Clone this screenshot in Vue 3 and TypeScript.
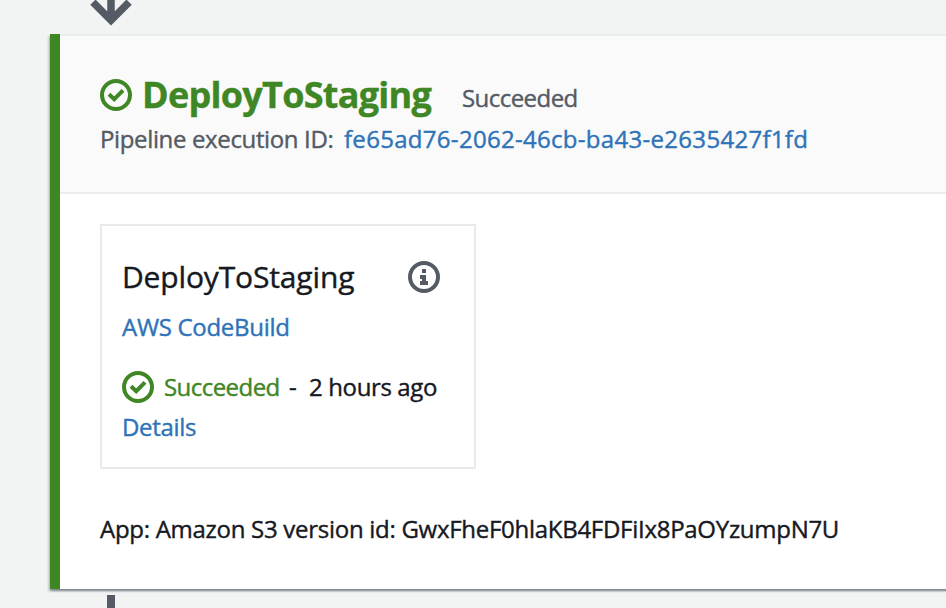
<script setup lang="ts">
interface Stage {
  name: string
  status: string
  executionId: string
  revision: string
}

interface Action {
  name: string
  provider: string
  status: string
  age: string
}

const stage: Stage = {
  name: 'DeployToStaging',
  status: 'Succeeded',
  executionId: 'fe65ad76-2062-46cb-ba43-e2635427f1fd',
  revision: 'App: Amazon S3 version id: GwxFheF0hlaKB4FDFiIx8PaOYzumpN7U',
}

const action: Action = {
  name: 'DeployToStaging',
  provider: 'AWS CodeBuild',
  status: 'Succeeded',
  age: '2 hours ago',
}
</script>

<template>
  <main class="pipeline">
    <svg class="arrow" viewBox="0 0 42 34" aria-hidden="true">
      <path d="M21 0V20M2.9 2.2L21 20.3L39.1 2.2" />
    </svg>

    <section class="stage">
      <header class="stage-header">
        <div class="title-row">
          <svg class="icon success" viewBox="0 0 32 32" aria-hidden="true">
            <circle cx="16" cy="16" r="14" />
            <path d="M9 15.2L14.2 20.2L23 11.4" />
          </svg>
          <h1 class="stage-name"><span>{{ stage.name }}</span></h1>
          <span class="stage-status">{{ stage.status }}</span>
        </div>
        <div class="execution">
          <span class="execution-label">Pipeline execution ID:</span>
          <a class="execution-id">{{ stage.executionId }}</a>
        </div>
      </header>

      <div class="stage-body">
        <article class="action">
          <div class="action-head">
            <h2 class="action-name">{{ action.name }}</h2>
            <svg class="icon info" viewBox="0 0 32 32" aria-hidden="true">
              <circle cx="16" cy="16" r="14" />
              <path d="M14 8h4v4h-4zM12 14h6v6h2v4h-8v-4h2v-2h-2z" />
            </svg>
          </div>
          <a class="provider">{{ action.provider }}</a>
          <div class="action-status">
            <svg class="icon success" viewBox="0 0 32 32" aria-hidden="true">
              <circle cx="16" cy="16" r="14" />
              <path d="M9 15.2L14.2 20.2L23 11.4" />
            </svg>
            <span class="status-text">{{ action.status }}</span>
            <span class="dash">-</span>
            <span class="age">{{ action.age }}</span>
          </div>
          <a class="details">Details</a>
        </article>
        <p class="revision"><span>{{ stage.revision }}</span></p>
      </div>
    </section>

    <div class="connector"></div>
  </main>
</template>

<style>
body {
  background: #f2f3f3;
  overflow: hidden;
}
</style>

<style scoped>
.pipeline {
  box-sizing: border-box;
  width: 946px;
  height: 608px;
  padding-left: 50px;
  overflow: hidden;
  background: #f2f3f3;
  color: #16191f;
  font-family: "Open Sans", "Noto Sans", sans-serif;
  font-size: 24px;
  font-weight: 500;
  line-height: 40px;
  letter-spacing: -0.3px;
  white-space: nowrap;
  -webkit-text-stroke: 0.4px currentColor;
}
.arrow {
  display: block;
  width: 42px;
  height: 34px;
  margin-left: 40px;
  fill: none;
  stroke: #545b64;
}
.arrow path {
  stroke-width: 7.5;
}
.stage {
  box-sizing: border-box;
  width: 920px;
  height: 555px;
  border-left: 10px solid #3f8624;
  background: #fff;
  box-shadow:
    0 2px 2px rgba(0, 28, 36, 0.3),
    2px 2px 2px rgba(0, 28, 36, 0.15),
    -2px 2px 2px rgba(0, 28, 36, 0.15);
}
.stage-header {
  box-sizing: border-box;
  height: 160px;
  padding: 39px 40px 0;
  border-top: 2px solid #eaeded;
  border-bottom: 2px solid #eaeded;
  background: #fafafa;
}
.title-row {
  display: flex;
  align-items: center;
  height: 40px;
}
.icon {
  flex: none;
  width: 32px;
  height: 32px;
  fill: none;
  stroke-width: 4;
}
.success {
  stroke: #3f8624;
}
.info {
  stroke: #545b64;
}
.info path {
  fill: #545b64;
  stroke: none;
}
h1,
h2,
p {
  margin: 0;
}
.stage-name {
  width: 289px;
  margin-left: 10px;
  color: #3f8624;
  font-size: 36px;
  font-weight: 700;
  letter-spacing: -0.73px;
}
.stage-status {
  margin-left: 31px;
  padding-top: 6px;
  color: #545b64;
  letter-spacing: -0.55px;
}
.execution {
  display: flex;
  gap: 10px;
  padding-top: 4px;
}
.execution-label {
  width: 234px;
  color: #545b64;
  letter-spacing: -0.36px;
}
.execution-id {
  letter-spacing: 0.3px;
}
a {
  color: #2e73b8;
}
.stage-body {
  padding: 30px 40px 0;
}
.action {
  box-sizing: border-box;
  display: flex;
  flex-direction: column;
  align-items: flex-start;
  width: 376px;
  height: 245px;
  padding: 31px 34px 0 20px;
  border: 2px solid #eaeaea;
}
.action-head {
  display: flex;
  align-items: center;
  justify-content: space-between;
  width: 100%;
  height: 40px;
}
.action-name {
  font-size: 30px;
  font-weight: 500;
  letter-spacing: -0.15px;
}
.provider {
  margin-top: 10px;
}
.action-status {
  display: flex;
  align-items: center;
  margin-top: 20px;
}
.status-text {
  width: 115px;
  margin-left: 10px;
  color: #3f8624;
  letter-spacing: -0.55px;
}
.dash {
  width: 9px;
  margin: 0 11px 0 10px;
}
.age {
  letter-spacing: -0.37px;
}
.revision {
  padding-top: 40px;
  letter-spacing: -0.28px;
}
.connector {
  width: 8px;
  height: 13px;
  margin: 6px 0 0 57px;
  background: #545b64;
}
</style>
